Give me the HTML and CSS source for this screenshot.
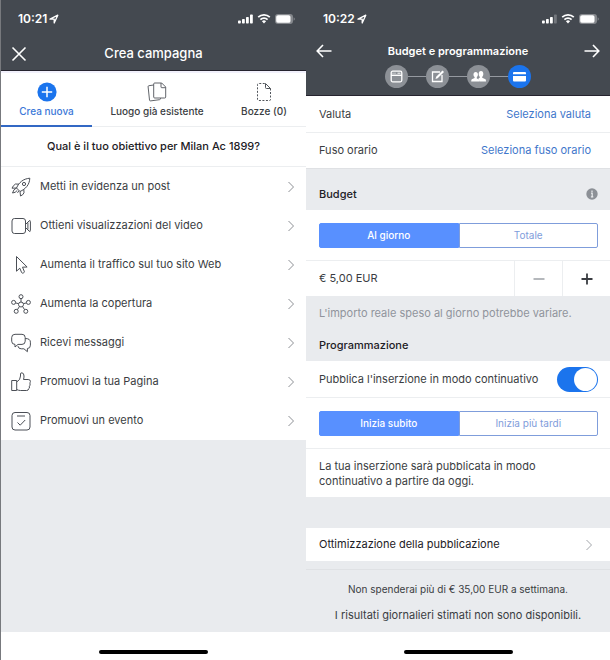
FILE: index.html
```
<!DOCTYPE html>
<html lang="it">
<head>
    <meta charset="UTF-8">
    <meta name="viewport" content="width=device-width, initial-scale=1">
    <title>Crea campagna</title>
    <link rel="stylesheet" href="styles.css">
</head>
<body>
    <svg class="sprite" width="0" height="0">
        <symbol id="location" viewBox="0 0 10 10">
            <path d="M1 5.2 8.8 1.2 5.2 9V5.2z" fill="none" stroke="currentColor" stroke-width="1.3" stroke-linejoin="round"/>
        </symbol>
        <symbol id="wifi" viewBox="0 0 14 11">
            <g fill="none" stroke="currentColor" stroke-width="1.7">
                <path d="M1.2 4.2a8.3 8.3 0 0 1 11.6 0"/>
                <path d="M3.4 6.6a5.1 5.1 0 0 1 7.2 0"/>
            </g>
            <path d="M4.9 8.2a3 3 0 0 1 4.2 0L7 10.4z" fill="currentColor"/>
        </symbol>
        <symbol id="battery" viewBox="0 0 20 10">
            <rect width="18" height="10" rx="3" fill="#85888d"/>
            <rect x="1.2" y="1.2" width="14.3" height="7.6" rx="1.9" fill="currentColor"/>
            <path d="M18.6 3.2v3.6q1.2-.6 1.2-1.8t-1.2-1.8z" fill="#85888d"/>
        </symbol>
        <symbol id="chevron" viewBox="0 0 8 12">
            <path d="M1.5 1 6.5 6l-5 5" fill="none" stroke="currentColor"/>
        </symbol>
    </svg>

    <div class="screens">
        <section class="screen screen-left">
            <header class="header">
                <div class="status">
                    <span class="clock">10:21</span>
                    <svg class="location" width="10" height="10"><use href="#location"/></svg>
                    <div class="signals">
                        <svg width="15" height="10" viewBox="0 0 15 10" fill="currentColor">
                            <rect x="0" y="6.5" width="2.8" height="3" rx=".7"/>
                            <rect x="4" y="5" width="2.8" height="4.5" rx=".7"/>
                            <rect x="8" y="3" width="2.8" height="6.5" rx=".7"/>
                            <rect x="12" y=".5" width="2.8" height="9" rx=".7"/>
                        </svg>
                        <svg width="14" height="11"><use href="#wifi"/></svg>
                        <svg width="20" height="10"><use href="#battery"/></svg>
                    </div>
                </div>
                <div class="nav">
                    <button class="nav-button" aria-label="Chiudi">
                        <svg width="16" height="16" viewBox="0 0 16 16"><path d="m1.5 1.5 13 13m0-13-13 13" stroke="currentColor" stroke-width="1.6"/></svg>
                    </button>
                    <h1 class="title">Crea campagna</h1>
                </div>
            </header>

            <div class="tabs">
                <button class="tab tab-active">
                    <svg width="20" height="20" viewBox="0 0 20 20"><circle cx="10" cy="10" r="9.6" fill="#1b74ed"/><path d="M10 4.8v10.4M4.8 10h10.4" stroke="#fff" stroke-width="1.5"/></svg>
                    Crea nuova
                </button>
                <button class="tab">
                    <svg width="20" height="20" viewBox="0 0 20 20" fill="none" stroke="#50545a" stroke-width=".9" stroke-linejoin="round">
                        <path d="M7.7 1h7l4 4v10q0 1-1 1H7.7q-1 0-1-1V2q0-1 1-1z"/>
                        <path d="M14 1v4q0 .7.8.7h3.6"/>
                        <path d="M6.7 3 1.9 3.7Q1 3.8 1.1 4.7L2.5 18q.1 1 1.1.9l8.9-1.2q1-.1 1.1-1.5"/>
                    </svg>
                    Luogo già esistente
                </button>
                <button class="tab">
                    <svg width="20" height="20" viewBox="0 0 20 20" fill="none" stroke="#50545a" stroke-linejoin="round">
                        <path d="M16.5 6.5v11q0 1-1 1h-11q-1 0-1-1v-15q0-1 1-1h7" stroke-dasharray="2 1.5"/>
                        <path d="m11.500 1.500 5 5h-4q-1 0-1-1z"/>
                    </svg>
                    Bozze (0)
                </button>
            </div>

            <h2 class="question">Qual è il tuo obiettivo per Milan Ac 1899?</h2>

            <nav class="goals">
                <a class="goal" href="#">
                    <svg class="goal-icon" viewBox="0 0 20 20">
                        <path d="M5.5 11C8 5.500 12 1.800 18.800 1.200 18.500 8 14.500 12 9 14.500z"/>
                        <circle cx="13" cy="7" r="1.600"/>
                        <path d="M8 7.200 4.500 7Q2 8.500 1 11.200l4.500-.2M12.800 12.500l.2 3.300q-1 2.300-3.500 3.200L9 14.500"/>
                        <path d="M5.500 11Q2.500 12 1.500 16q3-.2 4.700-2.500M6.500 15.800l1.300-1.900"/>
                    </svg>
                    <span>Metti in evidenza un post</span>
                    <svg class="chevron"><use href="#chevron"/></svg>
                </a>
                <a class="goal" href="#">
                    <svg class="goal-icon" viewBox="0 0 20 20">
                        <rect x="1" y="2.500" width="13.500" height="15" rx="2.500"/>
                        <path d="M14.500 8.500 18 5q1.400-1.200 1.400.5v9q0 1.700-1.400.5l-3.500-3.500M16.900 6.500v7"/>
                    </svg>
                    <span>Ottieni visualizzazioni del video</span>
                    <svg class="chevron"><use href="#chevron"/></svg>
                </a>
                <a class="goal" href="#">
                    <svg class="goal-icon" viewBox="0 0 20 20">
                        <path d="M5.500 1.500v14.700l3.300-3 1.800 4.300q.4.900 1.300.6l.9-.4q.9-.4.5-1.300l-1.800-4.200 4.600-.2z"/>
                    </svg>
                    <span>Aumenta il traffico sul tuo sito Web</span>
                    <svg class="chevron"><use href="#chevron"/></svg>
                </a>
                <a class="goal" href="#">
                    <svg class="goal-icon" viewBox="0 0 20 20">
                        <circle cx="10" cy="10.500" r="2.500"/>
                        <circle cx="10" cy="2.700" r="2"/>
                        <circle cx="2.600" cy="8.400" r="2"/>
                        <circle cx="17.400" cy="8.400" r="2"/>
                        <circle cx="5.200" cy="17.300" r="2"/>
                        <circle cx="14.800" cy="17.300" r="2"/>
                        <path d="M10 4.700V8M4.600 8.900l3 .8M15.400 8.900l-3 .8M6.400 15.700l2-3.100M13.600 15.700l-2-3.100"/>
                    </svg>
                    <span>Aumenta la copertura</span>
                    <svg class="chevron"><use href="#chevron"/></svg>
                </a>
                <a class="goal" href="#">
                    <svg class="goal-icon" viewBox="0 0 20 20">
                        <path d="M4 1.300h7q3.200 0 3.200 3.200v3.700q0 3.200-3.200 3.200H7L4 14v-2.600Q.7 11.400.7 8.200V4.500q0-3.200 3.300-3.200z"/>
                        <path d="M14.200 5.500q5.200 0 5.200 3.700v3q0 3.300-3 3.300v3.200l-3.500-2.900h-2.700q-2.700 0-3.300-2.700"/>
                    </svg>
                    <span>Ricevi messaggi</span>
                    <svg class="chevron"><use href="#chevron"/></svg>
                </a>
                <a class="goal" href="#">
                    <svg class="goal-icon" viewBox="0 0 20 20">
                        <rect x=".7" y="8.500" width="5" height="10"/>
                        <path d="M5.700 10Q9.500 8 9.500 4V2q0-1.200 1.400-1.200Q13 1 13 4q0 2-.5 3.500h4.700q2.200 0 2.200 1.900 0 1-.7 1.600.7.700.3 2-.1.800-.7 1.200.4.700 0 1.800-.2.700-.8 1 0 1.500-1.900 1.500H9.500q-2 0-3.800-1"/>
                    </svg>
                    <span>Promuovi la tua Pagina</span>
                    <svg class="chevron"><use href="#chevron"/></svg>
                </a>
                <a class="goal" href="#">
                    <svg class="goal-icon" viewBox="0 0 20 20">
                        <rect x="1" y="1.500" width="18" height="17.500" rx="3"/>
                        <path d="M6 5h8M6.500 11.500l2.700 2.700 5-5.200"/>
                    </svg>
                    <span>Promuovi un evento</span>
                    <svg class="chevron"><use href="#chevron"/></svg>
                </a>
            </nav>
            <div class="home"><div class="home-bar"></div></div>
        </section>

        <section class="screen">
            <header class="header header-steps">
                <div class="status">
                    <span class="clock">10:22</span>
                    <svg class="location" width="10" height="10"><use href="#location"/></svg>
                    <div class="signals">
                        <svg width="15" height="10" viewBox="0 0 15 10" fill="currentColor">
                            <rect x="0" y="6.500" width="2.800" height="3" rx=".7"/>
                            <rect x="4" y="5" width="2.800" height="4.500" rx=".7"/>
                            <rect x="8" y="3" width="2.800" height="6.500" rx=".7"/>
                            <rect x="12" y=".5" width="2.800" height="9" rx=".7" fill="#73777d"/>
                        </svg>
                        <svg width="14" height="11"><use href="#wifi"/></svg>
                        <svg width="20" height="10"><use href="#battery"/></svg>
                    </div>
                </div>
                <div class="nav">
                    <button class="nav-button" aria-label="Indietro">
                        <svg width="16" height="16" viewBox="0 0 16 16"><path d="M15.500 8h-14M7 2 1.200 8 7 14" fill="none" stroke="currentColor" stroke-width="1.600"/></svg>
                    </button>
                    <h1 class="title title-small">Budget e programmazione</h1>
                    <button class="nav-button" aria-label="Avanti">
                        <svg width="16" height="16" viewBox="0 0 16 16"><path d="M.5 8h14M9 2l5.800 6L9 14" fill="none" stroke="currentColor" stroke-width="1.600"/></svg>
                    </button>
                </div>
                <div class="steps">
                    <span class="step">
                        <svg width="13" height="13" viewBox="0 0 13 13"><rect x="1.200" y="1.200" width="10.600" height="10.600" rx="1.500" fill="none" stroke="currentColor" stroke-width="1.300"/><path d="M1 5.300h11" stroke="currentColor" stroke-width="1.400"/><path d="M2.500 3.200h1m1 0h1m2 0h3" stroke="currentColor"/></svg>
                    </span>
                    <span class="step-line"></span>
                    <span class="step">
                        <svg width="13" height="13" viewBox="0 0 13 13"><path d="M9 2H1.500v9.500H11V5" fill="none" stroke="currentColor" stroke-width="1.300"/><path d="m4.500 9 .7-2.300L11.500.5 13 2 6.700 8.300z" fill="currentColor"/></svg>
                    </span>
                    <span class="step-line"></span>
                    <span class="step">
                        <svg width="15" height="13" viewBox="0 0 15 13" fill="currentColor"><ellipse cx="10" cy="4" rx="2.300" ry="2.900"/><path d="M8.800 6h2.400v1.800l3.300 1.400q.5.300.5 2.300H8.500L7.400 8.600l1.400-.8z"/><ellipse cx="4.700" cy="4.600" rx="2.200" ry="2.700"/><path d="M3.600 6.500h2.200v2l1.900.8q.7.400.7 2.200H.2q0-2 .6-2.300l2.800-1.100z"/></svg>
                    </span>
                    <span class="step-line"></span>
                    <span class="step step-active">
                        <svg width="13" height="13" viewBox="0 0 13 13" fill="currentColor"><path d="M1 2h11q1 0 1 1v1.300H0V3q0-1 1-1zM0 6h13v4.500q0 1-1 1H1q-1 0-1-1z"/></svg>
                    </span>
                </div>
            </header>

            <div class="row"><span>Valuta</span><a class="link" href="#">Seleziona valuta</a></div>
            <div class="row row-line"><span>Fuso orario</span><a class="link" href="#">Seleziona fuso orario</a></div>

            <div class="section-title section-budget">
                <h2>Budget</h2>
                <svg width="12" height="12" viewBox="0 0 12 12"><circle cx="6" cy="6" r="5.700" fill="#8c9096"/><path d="M6 2.500v1.500M5 5.200h1.200v3.500M4.900 8.900h2.400" fill="none" stroke="#e9ebee" stroke-width="1.200"/></svg>
            </div>
            <div class="choice">
                <button class="choice-button choice-active">Al giorno</button>
                <button class="choice-button">Totale</button>
            </div>
            <div class="amount">
                <input class="amount-input" type="text" value="€ 5,00 EUR" aria-label="Importo">
                <button class="amount-button amount-minus" aria-label="Diminuisci">
                    <svg width="12" height="12" viewBox="0 0 12 12"><path d="M.5 6h11" stroke="currentColor" stroke-width="1.600"/></svg>
                </button>
                <button class="amount-button" aria-label="Aumenta">
                    <svg width="12" height="12" viewBox="0 0 12 12"><path d="M.5 6h11M6 .5v11" stroke="currentColor" stroke-width="1.800"/></svg>
                </button>
            </div>
            <p class="hint">L'importo reale speso al giorno potrebbe variare.</p>

            <div class="section-title"><h2>Programmazione</h2></div>
            <div class="row">
                <label for="continuous">Pubblica l'inserzione in modo continuativo</label>
                <input class="toggle" id="continuous" type="checkbox" checked>
            </div>
            <div class="choice choice-line">
                <button class="choice-button choice-active">Inizia subito</button>
                <button class="choice-button">Inizia più tardi</button>
            </div>
            <p class="description">La tua inserzione sarà pubblicata in modo continuativo a partire da oggi.</p>

            <a class="optimize" href="#">
                <span>Ottimizzazione della pubblicazione</span>
                <svg class="chevron"><use href="#chevron"/></svg>
            </a>
            <div class="summary">
                <p class="summary-small">Non spenderai più di € 35,00 EUR a settimana.</p>
                <p>I risultati giornalieri stimati non sono disponibili.</p>
            </div>
            <div class="home"><div class="home-bar"></div></div>
        </section>
    </div>
</body>
</html>
```

FILE: styles.css
```
* {
    box-sizing: border-box;
}
body {
    margin: 0;
    color: #3a3d42;
    font-family: Inter, "Liberation Sans", sans-serif;
    font-size: 11px;
    line-height: 15px;
}
h1, h2, p {
    margin: 0;
}
a {
    color: inherit;
    text-decoration: none;
}
button, input {
    margin: 0;
    padding: 0;
    border: none;
    background: none;
    color: inherit;
    font: inherit;
}
svg {
    display: block;
    flex: none;
}
.sprite {
    position: absolute;
}
.screens {
    display: grid;
    grid-template-columns: 306fr 304fr;
    min-height: 100vh;
}
.screen {
    display: flex;
    flex-direction: column;
    background-color: #e9ebee;
}
.screen-left {
    border-left: 1px solid #77797d;
}

/* header */
.header {
    height: 71px;
    background-color: #444950;
    border-bottom: 1px solid #25232e;
    color: white;
}
.header-steps {
    height: 96px;
}
.status {
    display: flex;
    align-items: center;
    height: 37px;
    padding: 0 11px 0 17px;
}
.clock {
    font-size: 12px;
    font-weight: 600;
}
.location {
    margin-left: 2px;
}
.signals {
    display: flex;
    align-items: center;
    gap: 4px;
    margin-left: auto;
}
.nav {
    display: grid;
    grid-template-columns: 16px 1fr 16px;
    align-items: center;
    height: 33px;
    padding: 0 10px;
}
.header-steps .nav {
    height: 28px;
}
.nav-button {
    height: 16px;
}
.title {
    text-align: center;
    font-size: 13px;
    font-weight: 500;
}
.title-small {
    font-size: 11px;
    font-weight: 600;
}
.steps {
    display: flex;
    justify-content: center;
    align-items: center;
}
.step {
    display: flex;
    align-items: center;
    justify-content: center;
    width: 23px;
    height: 23px;
    border-radius: 50%;
    background-color: #8c9096;
}
.step-line {
    width: 18px;
    height: 1px;
    background-color: #9599a0;
}
.step-active {
    background-color: #1b74ed;
}

/* create campaign */
.tabs {
    display: grid;
    grid-template-columns: 91fr 130fr 84fr;
    height: 56px;
    background-color: white;
    border-top: 2px solid #f1f0fb;
}
.tab {
    display: flex;
    flex-direction: column;
    align-items: center;
    gap: 2px;
    padding-top: 9px;
    border-bottom: 1px solid #eceef0;
    font-size: 10px;
    font-weight: 500;
}
.tab-active {
    border-bottom: 2px solid #3268c4;
    color: #3b78d8;
}
.question {
    padding: 12px 0;
    background-color: white;
    border-bottom: 1px solid #eceef0;
    color: #1d2025;
    text-align: center;
    font-size: 11px;
    font-weight: 500;
}
.goal {
    display: flex;
    align-items: center;
    gap: 9px;
    height: 39px;
    padding: 0 11px 0 10px;
    background-color: white;
}
.goal-icon {
    width: 20px;
    height: 20px;
    fill: none;
    stroke: #4b4f56;
    stroke-width: 1;
    stroke-linejoin: round;
}
.chevron {
    width: 8px;
    height: 12px;
    margin-left: auto;
    color: #8d9095;
}
.home {
    display: flex;
    justify-content: center;
    height: 28px;
    margin-top: auto;
    padding-top: 18px;
    background-color: white;
}
.home-bar {
    width: 109px;
    height: 4px;
    border-radius: 2px;
    background-color: black;
}

/* budget */
.row {
    display: flex;
    align-items: center;
    justify-content: space-between;
    height: 36px;
    padding: 0 12px 0 13px;
    background-color: white;
}
.row-line {
    border-top: 1px solid #eceef0;
}
.link {
    padding-right: 7px;
    color: #3f77cb;
}
.section-title {
    display: flex;
    align-items: center;
    justify-content: space-between;
    height: 32px;
    padding: 0 12px 0 13px;
    color: #1d2025;
}
.section-title h2 {
    font-size: 11px;
    font-weight: 500;
}
.section-budget {
    height: 42px;
    padding-top: 9px;
    border-top: 1px solid #dfe1e4;
}
.choice {
    display: flex;
    padding: 13px 12px 12px 13px;
    background-color: white;
}
.choice-line {
    border-top: 1px solid #eceef0;
}
.choice-button {
    flex: 1;
    height: 25px;
    border: 1px solid #7f9ddb;
    border-radius: 0 2px 2px 0;
    color: #7f9ddb;
    font-size: 10px;
}
.choice-active {
    border-color: #5890ff;
    border-radius: 2px 0 0 2px;
    background-color: #5890ff;
    color: white;
    font-weight: 500;
}
.amount {
    display: flex;
    height: 36px;
    background-color: white;
    border-top: 1px solid #eceef0;
}
.amount-input {
    flex: 1;
    min-width: 0;
    padding-left: 13px;
}
.amount-button {
    display: flex;
    align-items: center;
    justify-content: center;
    width: 48px;
    border-left: 1px solid #eceef0;
}
.amount-minus {
    color: #a3a6ab;
}
.hint {
    padding: 10px 13px 8px;
    color: #90949c;
}
.toggle {
    appearance: none;
    display: flex;
    width: 41px;
    height: 25px;
    padding: 1px;
    border-radius: 13px;
    background-color: #bec3c9;
}
.toggle::before {
    content: "";
    width: 23px;
    height: 23px;
    border-radius: 50%;
    background-color: white;
}
.toggle:checked {
    justify-content: flex-end;
    background-color: #1b74ed;
}
.description {
    padding: 10px 48px 8px 13px;
    background-color: white;
    border-top: 1px solid #eceef0;
}
.optimize {
    display: flex;
    align-items: center;
    height: 33px;
    margin-top: 31px;
    padding: 0 17px 0 13px;
    background-color: white;
    color: #1d2025;
}
.optimize .chevron {
    color: #a3a6ab;
}
.summary {
    margin-top: 8px;
    padding-top: 12px;
    border-top: 1px solid #dfe1e4;
    text-align: center;
}
.summary-small {
    margin-bottom: 11px;
    font-size: 10px;
}
```
